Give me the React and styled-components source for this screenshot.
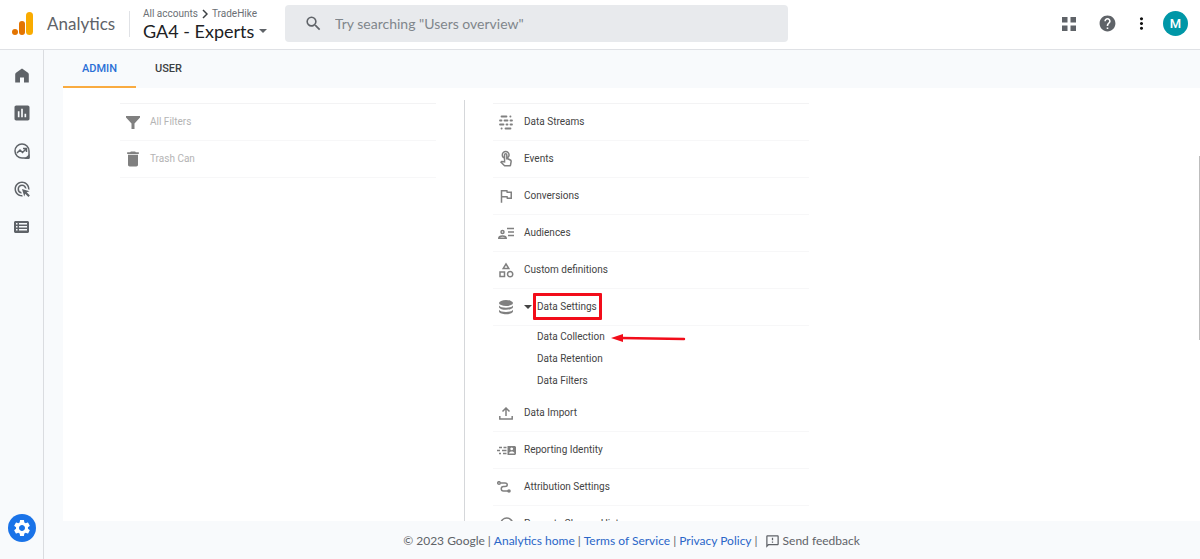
import React from "react";
import styled, { createGlobalStyle } from "styled-components";
import {
  MdAdsClick,
  MdAssessment,
  MdDelete,
  MdHelp,
  MdHistory,
  MdMoreVert,
  MdOutlineCategory,
  MdOutlineFeedback,
  MdOutlineFlag,
  MdOutlineTouchApp,
  MdSearch,
  MdSettings,
} from "react-icons/md";

const display = `"Google Sans", Lato, "Liberation Sans", sans-serif`;
const body = `Roboto, "Liberation Sans", sans-serif`;
const red = "#f20d1a";

const GlobalStyle = createGlobalStyle`
  *, *::before, *::after { box-sizing: border-box; }
  body { margin: 0; font-family: ${body}; color: #3c4043; background: #f8fafc; }
  button, input { font: inherit; color: inherit; }
  button { border: 0; padding: 0; background: none; cursor: pointer; }
  a { color: #2a66c8; text-decoration: none; }
  ul { list-style: none; margin: 0; padding: 0; }
  svg { display: block; flex: none; }
`;

const Page = styled.div`
  display: flex;
  flex-direction: column;
  height: 100vh;
`;

const Header = styled.header`
  display: flex;
  align-items: center;
  height: 50px;
  padding: 0 12px 2px;
  background: #fff;
  border-bottom: 1px solid #dfe1e5;
`;

const Brand = styled.a`
  display: flex;
  align-items: center;
  gap: 14px;
  width: 118px;
  height: 26px;
  flex: none;
  border-right: 1px solid #e0e2e6;
  font-family: ${display};
  font-size: 17px;
  line-height: 24px;
  color: #5f6368;
`;

const Account = styled.div`
  display: flex;
  flex-direction: column;
  flex: none;
  width: 142px;
  padding-left: 13px;
`;

const Crumbs = styled.nav`
  display: flex;
  align-items: center;
  gap: 4px;
  font-size: 10px;
  line-height: 14px;
  a { color: #6b6f74; }
`;

const PropertyButton = styled.button`
  display: flex;
  align-items: center;
  gap: 5px;
  font-family: ${display};
  font-size: 18px;
  line-height: 20px;
  color: #202124;
  white-space: nowrap;
  svg { color: #5f6368; }
`;

const SearchBox = styled.label`
  display: flex;
  align-items: center;
  gap: 12px;
  flex: 0 1 503px;
  height: 37px;
  margin-left: 13px;
  padding: 0 19px;
  border-radius: 4px;
  background: #e8eaed;
  color: #5f6368;
`;

const SearchInput = styled.input`
  flex: 1;
  min-width: 0;
  padding: 0;
  border: 0;
  outline: 0;
  background: none;
  font-family: ${display};
  font-size: 14px;
  &::placeholder { color: #80868b; opacity: 1; }
`;

const Actions = styled.div`
  display: flex;
  align-items: center;
  gap: 14px;
  margin-left: auto;
`;

const IconButton = styled.button`
  display: flex;
  align-items: center;
  justify-content: center;
  width: ${(p) => (p.$narrow ? 16 : 24)}px;
  height: 24px;
  color: ${(p) => (p.$dark ? "#111" : "#5f6368")};
`;

const Avatar = styled.button`
  width: 25px;
  height: 25px;
  border-radius: 50%;
  background: #0097a7;
  color: #fff;
  font-size: 13px;
  font-weight: 500;
`;

const Shell = styled.div`
  display: flex;
  flex: 1;
  min-height: 0;
`;

const Sidebar = styled.nav`
  display: flex;
  flex-direction: column;
  align-items: center;
  gap: 14px;
  width: 44px;
  flex: none;
  padding: 13px 0 17px;
  border-right: 1px solid #dadce0;
`;

const AdminButton = styled.button`
  display: flex;
  align-items: center;
  justify-content: center;
  width: 28px;
  height: 28px;
  margin-top: auto;
  border-radius: 50%;
  background: #1a73e8;
  color: #fff;
`;

const Main = styled.main`
  display: flex;
  flex-direction: column;
  flex: 1;
  min-width: 0;
  padding-left: 19px;
`;

const Tabs = styled.div`
  display: flex;
  flex: none;
  height: 38px;
`;

const Tab = styled.button`
  padding: 0 19px;
  border-bottom: 2px solid ${(p) => (p.$active ? "#f9ab40" : "transparent")};
  font-size: 11px;
  font-weight: 500;
  color: ${(p) => (p.$active ? "#2a6fd6" : "#3c4043")};
`;

const Panel = styled.div`
  position: relative;
  display: grid;
  grid-template-columns: minmax(0, 402px) minmax(0, 344px);
  flex: 1;
  min-height: 0;
  overflow: hidden;
  padding-top: 12px;
  background: #fff;
`;

const Column = styled.section`
  padding: 3px 28px 0 ${(p) => (p.$first ? 57 : 28)}px;
  border-right: ${(p) => (p.$first ? "1px solid #d5d7da" : "0")};
  &:last-of-type { padding-right: 0; }
`;

const Menu = styled.ul`
  border-top: 1px solid #f3f3f4;
`;

const MenuItem = styled.li`
  display: flex;
  height: 37px;
  border-bottom: 1px solid #f7f7f8;
`;

const MenuButton = styled.button`
  display: grid;
  grid-template-columns: 26px auto;
  align-items: center;
  column-gap: ${(p) => (p.$muted ? 4 : 5)}px;
  flex: 1;
  font-size: 10px;
  line-height: 16px;
  text-align: left;
  color: ${(p) => (p.$muted ? "#b4b4b4" : "#444")};
  > svg { justify-self: center; color: #808080; }
`;

const Expandable = styled.span`
  display: flex;
  align-items: center;
  gap: 5px;
`;

const Highlight = styled.span`
  position: relative;
  &::after {
    content: "";
    position: absolute;
    inset: -6px -5px -5px -4px;
    border: 3px solid ${red};
    border-radius: 1px;
  }
`;

const SubMenu = styled.ul`
  padding: 0 0 3px 44px;
`;

const SubItem = styled.li`
  display: flex;
  align-items: center;
  gap: 6px;
  height: 22px;
  font-size: 10px;
  line-height: 16px;
  a { color: #444; }
`;

const ScrollThumb = styled.div`
  position: absolute;
  top: 68px;
  right: 0;
  width: 1px;
  height: 184px;
  background: #bdbdbd;
`;

const Footer = styled.footer`
  display: flex;
  align-items: center;
  justify-content: center;
  gap: 3px;
  flex: none;
  height: 38px;
  padding-top: 2px;
  font-family: ${display};
  font-size: 12px;
  line-height: 16px;
  color: #5f6368;
`;

const FeedbackButton = styled.button`
  display: flex;
  align-items: center;
  gap: 3px;
  margin-left: 4px;
`;

const Svg = ({ w = 16, h = 16, children, ...rest }) => (
  <svg width={w} height={h} viewBox={`0 0 ${w} ${h}`} fill="currentColor" aria-hidden="true" {...rest}>
    {children}
  </svg>
);

const line = { fill: "none", stroke: "currentColor", strokeWidth: 1.5 };

const Logo = () => (
  <Svg w={21} h={24}>
    <rect x="14" width="7" height="23" rx="3.5" fill="#f9ab00" />
    <rect x="7" y="9" width="6" height="14" rx="3" fill="#e37400" />
    <circle cx="3" cy="20" r="3" fill="#e37400" />
  </Svg>
);

const Chevron = () => (
  <Svg w={6} h={10}><path d="M1 1l4 4-4 4" {...line} /></Svg>
);

const Caret = () => (
  <Svg w={8} h={4}><path d="M0 0h8L4 4z" /></Svg>
);

const AppsIcon = () => (
  <Svg w={14} h={14}><path d="M0 0h5.500v5.500H0zM8.500 0H14v5.500H8.500zM0 8.500h5.500V14H0zM8.500 8.500H14V14H8.500z" /></Svg>
);

const HomeIcon = () => (
  <Svg w={14} h={15}><path d="M7 .5l6 4.300q.8.600.8 1.600V14.500H9V9.500H5v5H.2V6.400q0-1 .8-1.600z" /></Svg>
);

const ExploreIcon = () => (
  <Svg w={16} h={16}>
    <path d="M15 15V8a7 7 0 1 0-7 7h7" {...line} />
    <path d="M15.500 11v5H10z" />
    <path d="M3 10l3-3 2.500 2.500L12 6M9 5.500h3.500v3.500" {...line} />
  </Svg>
);

const LibraryIcon = () => (
  <Svg w={15} h={12}>
    <path fillRule="evenodd" d="M1 0h13l1 1v10l-1 1H1l-1-1V1zM2 2v1.500h1.500V2zm3 0v1.500h8V2zM2 5v1.500h1.500V5zm3 0v1.500h8V5zM2 8v1.500h1.500V8zm3 0v1.500h8V8z" />
  </Svg>
);

const FunnelIcon = () => (
  <Svg w={14} h={13}><path d="M0 0h14v1.500L8.500 7.500V13h-3V7.500L0 1.500z" /></Svg>
);

const StreamsIcon = () => (
  <Svg w={14} h={15}>
    <g fill="none" stroke="currentColor" strokeWidth="1.800" strokeLinecap="round">
      <path d="M2.500 1.500h5M11.300 1.500h.2M1 5.500h1.500M5.500 5.500h3M11.500 5.500H13M1 9.500h3.500M7.500 9.500h1M11.500 9.500H13M2.500 13.500h.2M6.500 13.500h5" />
    </g>
  </Svg>
);

const AudienceIcon = () => (
  <Svg w={16} h={13}>
    <circle cx="4.500" cy="5" r="1.500" {...line} />
    <path d="M.8 11.300c0-3 7.400-3 7.400 0z" {...line} />
    <path d="M9 1.500h7M10 5h6M10 8.500h6" {...line} />
  </Svg>
);

const DatabaseIcon = () => (
  <Svg w={14} h={15}>
    <ellipse cx="7" cy="3" rx="7" ry="3" />
    <path d="M0 5.400c1.500 3 12.500 3 14 0v1.800c-1 3.400-13 3.400-14 0zM0 9.800c1.500 3 12.500 3 14 0v1.800c-1 3.600-13 3.600-14 0z" />
  </Svg>
);

const ImportIcon = () => (
  <Svg w={14} h={13}>
    <path d="M7 9V1.500M3.500 4.500L7 1l3.500 3.500M.8 9v3h12.400V9" {...line} />
  </Svg>
);

const IdentityIcon = () => (
  <Svg w={19} h={9}>
    <path d="M2 1.500h3M6.500 1.500h3M0 4.500h3M5 4.500h4.500M2 7.500h2M6 7.500h3.500" {...line} />
    <path fillRule="evenodd" d="M10.500 0H18l1 1v7l-1 1h-7.500zM14.700 1.500a1.400 1.400 0 1 0 .01 0zM12 7.500h5.500c-.5-2.600-5-2.600-5.500 0z" />
  </Svg>
);

const AttributionIcon = () => (
  <Svg w={18} h={12}>
    <circle cx="2" cy="2" r="1.300" {...line} />
    <circle cx="12" cy="10" r="1.800" />
    <path d="M3.500 2H8c3 0 3 3.500 0 3.500H6.500C3.500 5.500 3.500 10 6.500 10H11" {...line} />
  </Svg>
);

const Arrow = () => (
  <Svg w={75} h={10} color={red}>
    <path d="M0 6L12 2v8z" />
    <path d="M10 6l63 1" stroke="currentColor" strokeWidth="2.400" strokeLinecap="round" />
  </Svg>
);

const navItems = [
  ["Home", <HomeIcon />],
  ["Reports", <MdAssessment size={20} />],
  ["Explore", <ExploreIcon />],
  ["Advertising", <MdAdsClick size={18} />],
  ["Library", <LibraryIcon />],
];

const viewItems = [
  ["All Filters", <FunnelIcon />],
  ["Trash Can", <MdDelete size={20} />],
];

const propertyItems = [
  ["Data Streams", <StreamsIcon />],
  ["Events", <MdOutlineTouchApp size={18} />],
  ["Conversions", <MdOutlineFlag size={18} />],
  ["Audiences", <AudienceIcon />],
  ["Custom definitions", <MdOutlineCategory size={18} />],
];

const laterItems = [
  ["Data Import", <ImportIcon />],
  ["Reporting Identity", <IdentityIcon />],
  ["Attribution Settings", <AttributionIcon />],
  ["Property Change History", <MdHistory size={18} />],
];

const Item = ({ icon, muted, children }) => (
  <MenuItem>
    <MenuButton $muted={muted}>
      {icon}
      <span>{children}</span>
    </MenuButton>
  </MenuItem>
);

const renderItems = (items, muted) =>
  items.map(([label, icon]) => (
    <Item key={label} icon={icon} muted={muted}>{label}</Item>
  ));

export default function App() {
  return (
    <Page>
      <GlobalStyle />
      <Header>
        <Brand href="#"><Logo />Analytics</Brand>
        <Account>
          <Crumbs aria-label="Account">
            <a href="#accounts">All accounts</a>
            <Chevron />
            <a href="#tradehike">TradeHike</a>
          </Crumbs>
          <PropertyButton>GA4 - Experts<Caret /></PropertyButton>
        </Account>
        <SearchBox>
          <MdSearch size={19} />
          <SearchInput type="search" aria-label="Search" placeholder={'Try searching "Users overview"'} />
        </SearchBox>
        <Actions>
          <IconButton aria-label="Apps"><AppsIcon /></IconButton>
          <IconButton aria-label="Help"><MdHelp size={19} /></IconButton>
          <IconButton aria-label="More" $narrow $dark><MdMoreVert size={19} /></IconButton>
          <Avatar aria-label="Profile">M</Avatar>
        </Actions>
      </Header>
      <Shell>
        <Sidebar aria-label="Main">
          {navItems.map(([label, icon]) => (
            <IconButton key={label} aria-label={label}>{icon}</IconButton>
          ))}
          <AdminButton aria-label="Admin"><MdSettings size={20} /></AdminButton>
        </Sidebar>
        <Main>
          <Tabs role="tablist">
            <Tab role="tab" aria-selected="true" $active>ADMIN</Tab>
            <Tab role="tab" aria-selected="false">USER</Tab>
          </Tabs>
          <Panel>
            <Column $first>
              <Menu>{renderItems(viewItems, true)}</Menu>
            </Column>
            <Column>
              <Menu>
                {renderItems(propertyItems)}
                <MenuItem>
                  <MenuButton aria-expanded="true">
                    <DatabaseIcon />
                    <Expandable><Caret /><Highlight>Data Settings</Highlight></Expandable>
                  </MenuButton>
                </MenuItem>
                <li>
                  <SubMenu>
                    <SubItem><a href="#collection">Data Collection</a><Arrow /></SubItem>
                    <SubItem><a href="#retention">Data Retention</a></SubItem>
                    <SubItem><a href="#filters">Data Filters</a></SubItem>
                  </SubMenu>
                </li>
                {renderItems(laterItems)}
              </Menu>
            </Column>
            <ScrollThumb />
          </Panel>
          <Footer>
            <span>© 2023 Google</span>|
            <a href="#home">Analytics home</a>|
            <a href="#terms">Terms of Service</a>|
            <a href="#privacy">Privacy Policy</a>|
            <FeedbackButton><MdOutlineFeedback size={15} />Send feedback</FeedbackButton>
          </Footer>
        </Main>
      </Shell>
    </Page>
  );
}
